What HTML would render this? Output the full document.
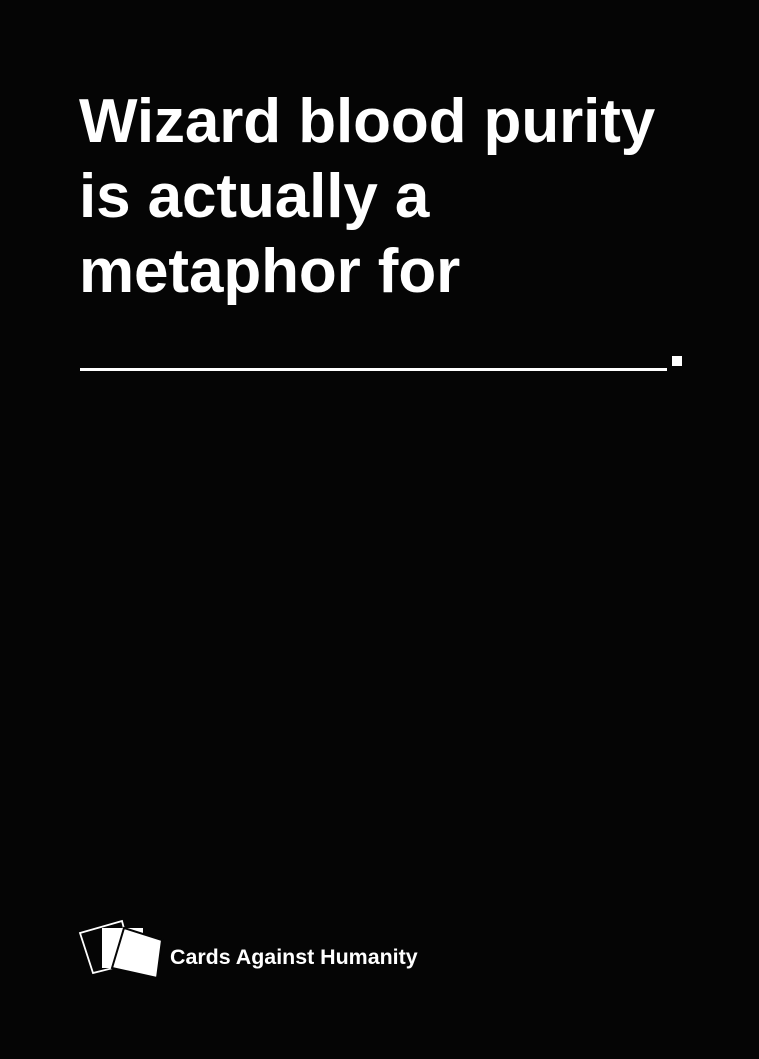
<!DOCTYPE html>
<html><head><style>
html,body{margin:0;padding:0;background:#050505;}
body{width:759px;height:1059px;position:relative;overflow:hidden;font-family:"Liberation Sans",Arial,sans-serif;color:#fff;}
.t{position:absolute;left:79px;top:84px;font-size:62px;font-weight:bold;line-height:75px;letter-spacing:-0.1px;white-space:nowrap;}
.u{position:absolute;left:80px;top:368px;width:587px;height:3px;background:#fff;}
.d{position:absolute;left:672px;top:356px;width:10px;height:10px;background:#fff;}
.l{position:absolute;left:170px;top:945px;font-size:21.4px;font-weight:bold;white-space:nowrap;}
</style></head><body>
<div class="t">Wizard blood purity<br>is actually a<br>metaphor for</div>
<div class="u"></div><div class="d"></div>
<svg style="position:absolute;left:76px;top:918px" width="92" height="66" viewBox="0 0 92 66">
<polygon points="4,15 46,3 57,45 17,55" fill="#050505" stroke="#fff" stroke-width="1.8"/>
<polygon points="26,10 67,10 67,50 26,50" fill="#fff"/>
<polygon points="48,10 86,22 81,60 36,50" fill="#fff" stroke="#050505" stroke-width="2"/>
</svg>
<div class="l">Cards Against Humanity</div>
</body></html>
